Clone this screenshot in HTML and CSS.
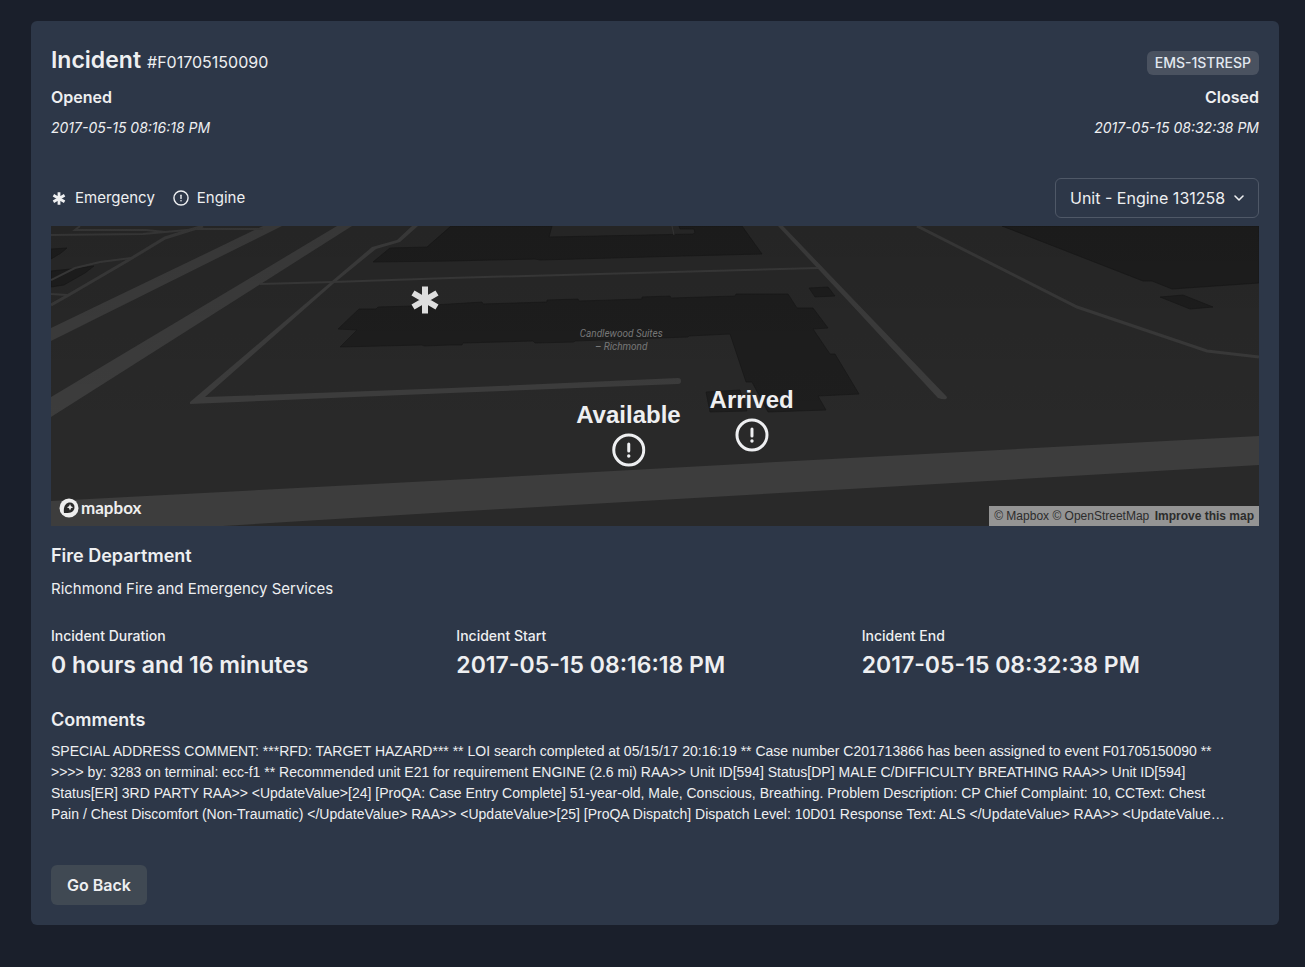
FILE: index.html
```html
<!DOCTYPE html>
<html lang="en">
<head>
<meta charset="utf-8">
<meta name="viewport" content="width=device-width, initial-scale=1">
<title>Incident #F01705150090</title>
<link rel="stylesheet" href="styles.css">
</head>
<body>
<svg class="defs" aria-hidden="true">
  <symbol id="asterisk" viewBox="0 0 28 28">
    <path d="M14 0.500V27.500M2 7L26 21M26 7L2 21" fill="none" stroke="currentColor" stroke-width="6"/>
  </symbol>
  <symbol id="alert" viewBox="0 0 34 34">
    <circle cx="17" cy="17" r="15" fill="none" stroke="currentColor" stroke-width="3"/>
    <path d="M17 11V18" fill="none" stroke="currentColor" stroke-width="3" stroke-linecap="round"/>
    <circle cx="17" cy="23" r="1.700" fill="currentColor"/>
  </symbol>
</svg>
<main class="card">
  <header class="row">
    <div class="title">
      <h1 class="heading">Incident</h1>
      <span class="number">#F01705150090</span>
    </div>
    <span class="badge">EMS-1STRESP</span>
  </header>
  <section class="row times">
    <div>
      <h2 class="label">Opened</h2>
      <time class="stamp">2017-05-15 08:16:18 PM</time>
    </div>
    <div class="end">
      <h2 class="label">Closed</h2>
      <time class="stamp">2017-05-15 08:32:38 PM</time>
    </div>
  </section>
  <section class="row toolbar">
    <div class="legend">
      <span class="key"><svg class="key-icon" aria-hidden="true"><use href="#asterisk"/></svg>Emergency</span>
      <span class="key"><svg class="key-icon ring" aria-hidden="true"><use href="#alert"/></svg>Engine</span>
    </div>
    <div class="picker">
      <select class="unit" aria-label="Unit">
        <option>Unit - Engine 131258</option>
      </select>
      <svg class="chevron" viewBox="0 0 12 12" aria-hidden="true"><path d="M2 4L6 8L10 4" fill="none" stroke="currentColor" stroke-width="1.600" stroke-linecap="round" stroke-linejoin="round"/></svg>
    </div>
  </section>
  <section class="map" aria-label="Incident map">
    <svg class="terrain" viewBox="0 0 1208 300" preserveAspectRatio="none" aria-hidden="true">
      <defs>
        <linearGradient id="fade" x1="0" y1="0" x2="0" y2="1">
          <stop offset="0" stop-color="#000" stop-opacity=".1"/>
          <stop offset=".7" stop-color="#000" stop-opacity="0"/>
        </linearGradient>
      </defs>
      <rect width="1208" height="300" fill="#292929"/>
      <g fill="#1e1e1e" stroke="#181818" stroke-width=".7">
        <path d="M0 23L16 22L10 27L0 33Z"/>
        <path d="M0 45L20 43L43 40L34 47L13 59L0 61Z"/>
        <path d="M322 36L339 22L376 21L400 0H501L498 11L642 8L644 7L643 3L629 3L628 0H691L711 28L632 30L489 34L484 33L399 35Z"/>
        <path d="M287 103L308 83H325L327 81L361 80L399 78L431 76L432 78L496 76V74L527 73L528 75L591 73V71L619 70L620 72L684 70L685 68H737L746 82H762L777 102L762 103L779 128H784L808 168L767 170L775 184L717 186L701 156H695L679 108L638 110L637 111L524 115L523 116L484 117L482 115L412 117L411 119L399 119L373 120L371 119L289 121L306 104Z"/>
        <path d="M655 166L689 164L696 185L659 186Z"/>
        <path d="M758 62L777 61L784 70L764 71Z"/>
        <path d="M951 0L1092 55H1101L1121 63L1208 57V0Z"/>
        <path d="M1109 71L1132 69L1162 81L1139 83Z"/>
      </g>
      <g fill="#3d3d3d">
        <path d="M0 102L212 0H231L0 115Z"/>
        <path d="M0 171L286 0H301L0 191Z"/>
        <path d="M361 0L346 14L321 21L139 176V178L400 167L627 158V152L400 162L154 171L282 58L325 23L349 16L367 0Z"/>
        <circle cx="627" cy="155" r="3"/>
        <path d="M727 0H732L799 70L896 171Q896 175 887 172L799 77Z"/>
        <path d="M0 275L399 254L799 232L1208 210V239L799 263L399 286L172 300H0Z"/>
      </g>
      <g fill="none" stroke="#3a3a3a" stroke-width="2">
        <path d="M209 58L282 56L399 52L767 42"/>
        <path d="M866 0L1026 81L1156 125L1208 131" stroke-width="3"/>
        <path d="M152 0L114 12L76 35L16 70L0 79" stroke-width="3"/>
        <path d="M0 54L24 42L49 36L80 32"/>
        <path d="M0 68L16 69"/>
        <path d="M0 9L92 8L125 5L146 3L212 3"/>
        <path d="M29 0L24 4H95L114 6"/>
        <path d="M621 0L623 9" stroke-width="1"/>
      </g>
      <rect width="1208" height="300" fill="url(#fade)"/>
    </svg>
    <p class="place">Candlewood Suites<br>– Richmond</p>
    <svg class="pin pin-emergency" role="img" aria-label="Emergency"><use href="#asterisk"/></svg>
    <div class="pin pin-available">Available<svg class="pin-icon" aria-hidden="true"><use href="#alert"/></svg></div>
    <div class="pin pin-arrived">Arrived<svg class="pin-icon" aria-hidden="true"><use href="#alert"/></svg></div>
    <a class="brand" href="#mapbox">
      <svg class="brand-mark" viewBox="0 0 20 20" aria-hidden="true">
        <circle cx="10" cy="10" r="9.500" fill="#eee"/>
        <path d="M5 15C4 8 7 4.500 11 4.500A4.500 4.500 0 0 1 15.500 9C15.500 14 11 15.500 5 15Z" fill="#292929"/>
        <path d="M11 6L12 8.200L14.200 9.200L12 10.200L11 12.400L10 10.200L7.800 9.200L10 8.200Z" fill="#eee"/>
      </svg>mapbox</a>
    <div class="credits"><a href="#mapbox">© Mapbox</a> <a href="#osm">© OpenStreetMap</a> <a class="improve" href="#improve">Improve this map</a></div>
  </section>
  <section class="department">
    <h2 class="subheading">Fire Department</h2>
    <p class="body">Richmond Fire and Emergency Services</p>
  </section>
  <dl class="stats">
    <div><dt class="stat-label">Incident Duration</dt><dd class="stat">0 hours and 16 minutes</dd></div>
    <div><dt class="stat-label">Incident Start</dt><dd class="stat">2017-05-15 08:16:18 PM</dd></div>
    <div><dt class="stat-label">Incident End</dt><dd class="stat">2017-05-15 08:32:38 PM</dd></div>
  </dl>
  <section>
    <h2 class="subheading">Comments</h2>
    <p class="comments">SPECIAL ADDRESS COMMENT: ***RFD: TARGET HAZARD*** ** LOI search completed at 05/15/17 20:16:19 ** Case number C201713866 has been assigned to event F01705150090 **<br>&gt;&gt;&gt;&gt; by: 3283 on terminal: ecc-f1 ** Recommended unit E21 for requirement ENGINE (2.6 mi) RAA&gt;&gt; Unit ID[594] Status[DP] MALE C/DIFFICULTY BREATHING RAA&gt;&gt; Unit ID[594]<br>Status[ER] 3RD PARTY RAA&gt;&gt; &lt;UpdateValue&gt;[24] [ProQA: Case Entry Complete] 51-year-old, Male, Conscious, Breathing. Problem Description: CP Chief Complaint: 10, CCText: Chest<br>Pain / Chest Discomfort (Non-Traumatic) &lt;/UpdateValue&gt; RAA&gt;&gt; &lt;UpdateValue&gt;[25] [ProQA Dispatch] Dispatch Level: 10D01 Response Text: ALS &lt;/UpdateValue&gt; RAA&gt;&gt; &lt;UpdateValue…</p>
  </section>
  <button class="back" type="button">Go Back</button>
</main>
</body>
</html>
```
FILE: styles.css
```css
* { box-sizing: border-box; }
body {
  margin: 0;
  padding: 21px 26px 42px 31px;
  background: #1a1f2b;
  color: #eeeff1;
  font-family: Inter, "Liberation Sans", sans-serif;
  font-size: 16px;
  line-height: 24px;
}
h1, h2, p, dl, dd { margin: 0; }
.defs { position: absolute; width: 0; height: 0; }
.card {
  padding: 20px;
  border-radius: 6px;
  background: #2d3748;
}
.row { display: flex; justify-content: space-between; }
header.row { align-items: center; padding-top: 3px; }
.title { display: flex; align-items: baseline; gap: 6px; }
.heading { font-size: 23px; line-height: 32px; font-weight: 600; }
.number { font-size: 16px; }
.badge {
  padding: 0 8px;
  margin-top: 6px;
  border-radius: 6px;
  background: #4a5260;
  color: #e2e8f0;
  font-size: 14px;
  font-weight: 500;
}
.times { padding-top: 9px; }
.label { font-size: 16px; font-weight: 600; line-height: 24px; }
.stamp { display: block; margin-top: 8px; font-size: 14px; font-style: italic; line-height: 21px; }
.end { text-align: right; }
.toolbar { align-items: center; margin-top: 40px; margin-bottom: 8px; }
.legend { display: flex; gap: 18px; font-size: 15px; }
.key { display: flex; align-items: center; gap: 8px; }
.key-icon { width: 16px; height: 13px; }
.ring { width: 16px; height: 16px; }
.picker { position: relative; }
.unit {
  appearance: none;
  height: 40px;
  padding: 0 32px 0 14px;
  border: 1px solid #4f5867;
  border-radius: 6px;
  background: transparent;
  color: inherit;
  font: inherit;
}
.chevron { position: absolute; right: 14px; top: 14px; width: 12px; height: 12px; pointer-events: none; }
.map { position: relative; height: 300px; overflow: hidden; background: #292929; }
.terrain { display: block; width: 100%; height: 100%; }
.place {
  position: absolute;
  left: 47.2%;
  top: 101px;
  transform: translateX(-50%);
  color: #777;
  font: italic 10px/13px Roboto, sans-serif;
  text-align: center;
  white-space: nowrap;
}
.pin {
  position: absolute;
  display: flex;
  flex-direction: column;
  align-items: center;
  transform: translateX(-50%);
  font: bold 24px/28px "Liberation Sans", sans-serif;
}
.pin-icon { width: 34px; height: 34px; margin-top: 4px; }
.pin-emergency { left: 31%; top: 60px; width: 28px; height: 28px; color: #dedede; }
.pin-available { left: 47.8%; top: 175px; }
.pin-arrived { left: 58%; top: 160px; }
.brand {
  position: absolute;
  left: 8px;
  bottom: 8px;
  display: flex;
  align-items: center;
  gap: 2px;
  color: #eee;
  font: 700 17px/20px Lato, sans-serif;
  text-decoration: none;
}
.brand-mark { width: 20px; height: 20px; }
.credits {
  position: absolute;
  right: 0;
  bottom: 0;
  padding: 0 5px;
  background: #949494;
  color: #2c2c2c;
  font: 12px/20px "Liberation Sans", sans-serif;
}
.credits a { color: inherit; text-decoration: none; }
.credits .improve { margin-left: 2px; font-weight: bold; }
.department { padding-top: 16px; }
.subheading { font-size: 18px; line-height: 27px; font-weight: 600; }
.body { margin-top: 8px; font-size: 15px; }
.stats { display: grid; grid-template-columns: repeat(3, 1fr); gap: 8px; padding-top: 24px; padding-bottom: 23px; }
.stat-label { font-size: 14px; line-height: 21px; font-weight: 500; }
.stat { margin-top: 1px; font-size: 23px; line-height: 36px; font-weight: 600; }
.comments { margin-top: 8px; font-family: "Liberation Sans", sans-serif; font-size: 14px; line-height: 21px; }
.back {
  display: block;
  height: 40px;
  margin-top: 40px;
  padding: 0 16px;
  border: 0;
  border-radius: 6px;
  background: #404953;
  color: inherit;
  font: inherit;
  font-weight: 600;
}
```
